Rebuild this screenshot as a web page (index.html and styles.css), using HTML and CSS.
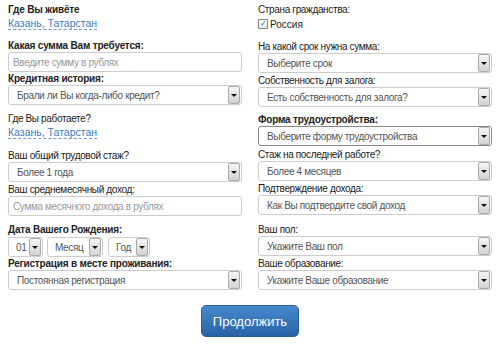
FILE: index.html
```html
<!DOCTYPE html>
<html lang="ru">
<head>
  <meta charset="UTF-8">
  <title>Заявка на кредит</title>
  <link rel="stylesheet" href="styles.css">
</head>
<body>
  <form class="credit-form">
    <div class="columns">
      <div class="col">
        <div class="field gap9">
          <div class="label bold">Где Вы живёте</div>
          <a class="city" href="#">Казань, Татарстан</a>
        </div>
        <div class="field">
          <div class="label bold">Какая сумма Вам требуется:</div>
          <input class="text" type="text" placeholder="Введите сумму в рублях">
        </div>
        <div class="field gap7">
          <div class="label bold">Кредитная история:</div>
          <div class="select"><select><option>Брали ли Вы когда-либо кредит?</option></select></div>
        </div>
        <div class="field gap10">
          <div class="label">Где Вы работаете?</div>
          <a class="city" href="#">Казань, Татарстан</a>
        </div>
        <div class="field gap1">
          <div class="label">Ваш общий трудовой стаж?</div>
          <div class="select"><select><option>Более 1 года</option></select></div>
        </div>
        <div class="field gap7">
          <div class="label">Ваш среднемесячный доход:</div>
          <input class="text" type="text" placeholder="Сумма месячного дохода в рублях">
        </div>
        <div class="field">
          <div class="label bold">Дата Вашего Рождения:</div>
          <div class="date">
            <div class="select day"><select><option>01</option></select></div>
            <div class="select month"><select><option>Месяц</option></select></div>
            <div class="select year"><select><option>Год</option></select></div>
          </div>
        </div>
        <div class="field">
          <div class="label bold">Регистрация в месте проживания:</div>
          <div class="select"><select><option>Постоянная регистрация</option></select></div>
        </div>
      </div>

      <div class="col">
        <div class="field gap9">
          <div class="label">Страна гражданства:</div>
          <label class="check"><span class="box">&#10003;</span>Россия</label>
        </div>
        <div class="field gap1">
          <div class="label">На какой срок нужна сумма:</div>
          <div class="select"><select><option>Выберите срок</option></select></div>
        </div>
        <div class="field gap6">
          <div class="label">Собственность для залога:</div>
          <div class="select"><select><option>Есть собственность для залога?</option></select></div>
        </div>
        <div class="field gap2">
          <div class="label bold">Форма трудоустройства:</div>
          <div class="select active"><select><option>Выберите форму трудоустройства</option></select></div>
        </div>
        <div class="field gap1">
          <div class="label">Стаж на последней работе?</div>
          <div class="select"><select><option>Более 4 месяцев</option></select></div>
        </div>
        <div class="field gap8">
          <div class="label">Подтверждение дохода:</div>
          <div class="select"><select><option>Как Вы подтвердите свой доход</option></select></div>
        </div>
        <div class="field gap1">
          <div class="label">Ваш пол:</div>
          <div class="select"><select><option>Укажите Ваш пол</option></select></div>
        </div>
        <div class="field">
          <div class="label">Ваше образование:</div>
          <div class="select"><select><option>Укажите Ваше образование</option></select></div>
        </div>
      </div>
    </div>

    <div class="actions">
      <button type="submit" class="submit">Продолжить</button>
    </div>
  </form>
</body>
</html>
```

FILE: styles.css
```css
body {
  margin: 0;
  padding: 3px 8px 0;
  font-family: "Liberation Sans", Arial, sans-serif;
  font-size: 10px;
  color: #222;
  background: #fff;
}
.columns {
  display: grid;
  grid-template-columns: 234px 234px;
  column-gap: 16px;
}
.field {
  margin-bottom: 0;
}
.gap1 { margin-bottom: 1px; }
.gap2 { margin-bottom: 2px; }
.gap6 { margin-bottom: 6px; }
.gap7 { margin-bottom: 7px; }
.gap8 { margin-bottom: 8px; }
.gap9 { margin-bottom: 9px; }
.gap10 { margin-bottom: 10px; }

.label {
  line-height: 13px;
  height: 13px;
  letter-spacing: -0.35px;
}
.label.bold {
  font-weight: bold;
  letter-spacing: -0.2px;
}
.city {
  display: inline-block;
  margin-top: 1px;
  font-size: 10.5px;
  line-height: 12px;
  color: #3a7bbf;
  text-decoration: none;
  border-bottom: 1px dashed #6d9fd3;
}
.check {
  display: flex;
  align-items: center;
  height: 14px;
  margin-top: 1px;
}
.check .box {
  width: 8px;
  height: 8px;
  border: 1px solid #8a8a8a;
  background: linear-gradient(#fff, #e4e4e4);
  font-size: 8px;
  line-height: 8px;
  text-align: center;
  color: #2d5c9c;
  margin-right: 2px;
}

.text, .select select {
  box-sizing: border-box;
  width: 100%;
  height: 20px;
  margin: 0;
  border: 1px solid #ccc;
  border-radius: 3px;
  background: #fff;
  font-family: "Liberation Sans", Arial, sans-serif;
  font-size: 10px;
  letter-spacing: -0.35px;
  color: #555;
  outline: none;
}
.text {
  display: block;
  padding: 0 4px;
}
.text::placeholder {
  color: #999;
}
.select {
  position: relative;
}
.select select {
  display: block;
  padding: 0 16px 0 8px;
  appearance: none;
  -webkit-appearance: none;
}
.select.active select {
  border-color: #888;
}
.select::after {
  content: "";
  position: absolute;
  top: 1px;
  right: 2px;
  width: 10px;
  height: 16px;
  border: 1px solid #aaa;
  border-radius: 2px;
  background: linear-gradient(#f6f6f6, #d2d2d2);
  pointer-events: none;
}
.select::before {
  content: "";
  position: absolute;
  top: 9px;
  right: 5px;
  border-left: 3px solid transparent;
  border-right: 3px solid transparent;
  border-top: 3px solid #111;
  z-index: 1;
  pointer-events: none;
}

.date {
  display: flex;
  gap: 4px;
  margin-top: 1px;
}
.date .day { width: 35px; }
.date .month { width: 56px; margin-right: 1px; }
.date .year { width: 42px; }
.date .select select { padding: 0 14px 0 7px; }

.actions {
  text-align: center;
  margin-top: 15px;
}
.submit {
  width: 98px;
  height: 32px;
  border: 1px solid #2a5f9e;
  border-radius: 5px;
  background: linear-gradient(#4689cc, #2862a6);
  color: #fff;
  font-family: "Liberation Sans", Arial, sans-serif;
  font-size: 13px;
  cursor: pointer;
}
```
